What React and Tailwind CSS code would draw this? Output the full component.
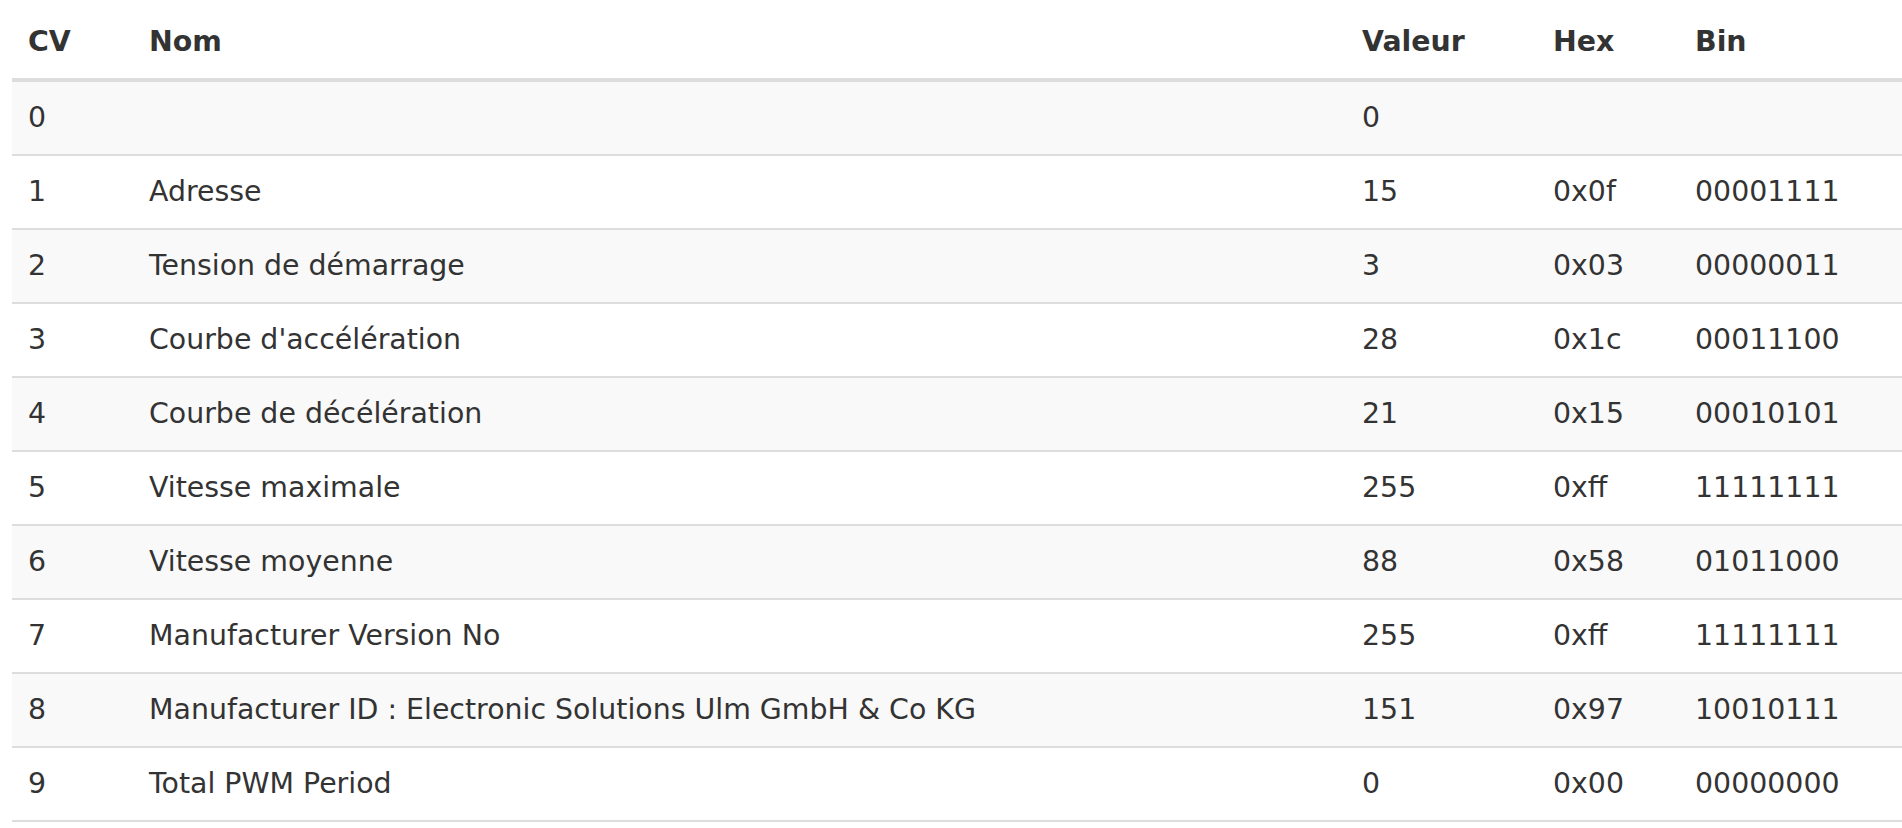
import React from "react";

const rows = [
  ["0", "", "0", "", ""],
  ["1", "Adresse", "15", "0x0f", "00001111"],
  ["2", "Tension de démarrage", "3", "0x03", "00000011"],
  ["3", "Courbe d'accélération", "28", "0x1c", "00011100"],
  ["4", "Courbe de décélération", "21", "0x15", "00010101"],
  ["5", "Vitesse maximale", "255", "0xff", "11111111"],
  ["6", "Vitesse moyenne", "88", "0x58", "01011000"],
  ["7", "Manufacturer Version No", "255", "0xff", "11111111"],
  ["8", "Manufacturer ID : Electronic Solutions Ulm GmbH & Co KG", "151", "0x97", "10010111"],
  ["9", "Total PWM Period", "0", "0x00", "00000000"],
];

const headers = ["CV", "Nom", "Valeur", "Hex", "Bin"];

export default function App() {
  return (
    <div className="min-h-screen bg-white pt-[6px] pl-[12px] font-['DejaVu_Sans',Verdana,sans-serif] text-[28.4px] leading-[40px] text-[#333]">
      <table className="w-[1890px] table-fixed border-collapse">
        <colgroup>
          <col className="w-[121px]" />
          <col className="w-[1213px]" />
          <col className="w-[191px]" />
          <col className="w-[142px]" />
          <col />
        </colgroup>
        <thead>
          <tr>
            {headers.map((h) => (
              <th key={h} className="border-b-4 border-[#ddd] p-4 text-left font-bold">
                {h}
              </th>
            ))}
          </tr>
        </thead>
        <tbody>
          {rows.map((r, i) => (
            <tr key={r[0]} className={i % 2 === 0 ? "bg-[#f9f9f9]" : "bg-white"}>
              {r.map((c, j) => (
                <td key={j} className="whitespace-nowrap border-b-2 border-[#ddd] p-4 align-top">
                  {c}
                </td>
              ))}
            </tr>
          ))}
        </tbody>
      </table>
    </div>
  );
}
